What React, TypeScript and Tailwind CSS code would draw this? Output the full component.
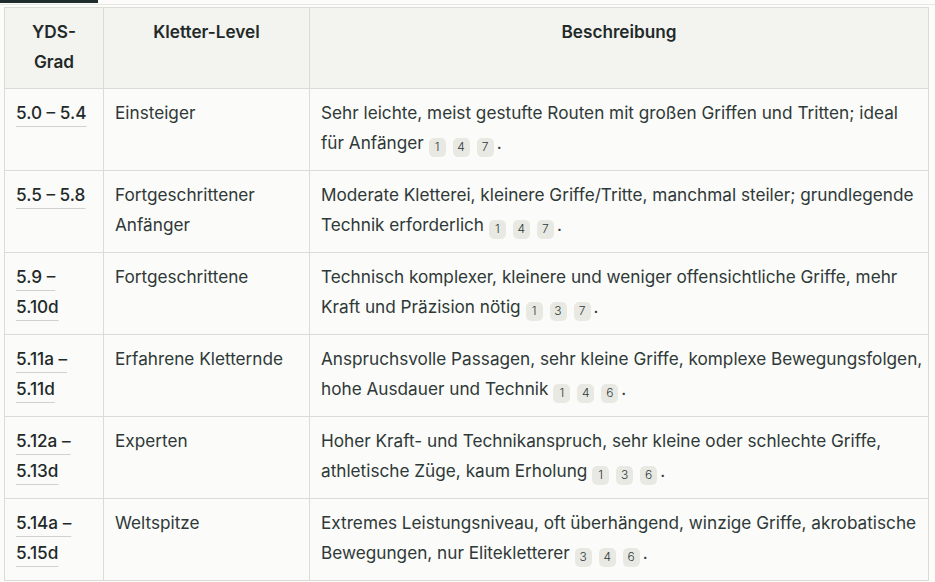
import React from "react";

type Row = {
  grade: string;
  level: string;
  desc: [string, string];
  refs: number[];
};

const rows: Row[] = [
  {
    grade: "5.0 – 5.4",
    level: "Einsteiger",
    desc: ["Sehr leichte, meist gestufte Routen mit großen Griffen und Tritten; ideal", "für Anfänger"],
    refs: [1, 4, 7],
  },
  {
    grade: "5.5 – 5.8",
    level: "Fortgeschrittener Anfänger",
    desc: ["Moderate Kletterei, kleinere Griffe/Tritte, manchmal steiler; grundlegende", "Technik erforderlich"],
    refs: [1, 4, 7],
  },
  {
    grade: "5.9 – 5.10d",
    level: "Fortgeschrittene",
    desc: ["Technisch komplexer, kleinere und weniger offensichtliche Griffe, mehr", "Kraft und Präzision nötig"],
    refs: [1, 3, 7],
  },
  {
    grade: "5.11a – 5.11d",
    level: "Erfahrene Kletternde",
    desc: ["Anspruchsvolle Passagen, sehr kleine Griffe, komplexe Bewegungsfolgen,", "hohe Ausdauer und Technik"],
    refs: [1, 4, 6],
  },
  {
    grade: "5.12a – 5.13d",
    level: "Experten",
    desc: ["Hoher Kraft- und Technikanspruch, sehr kleine oder schlechte Griffe,", "athletische Züge, kaum Erholung"],
    refs: [1, 3, 6],
  },
  {
    grade: "5.14a – 5.15d",
    level: "Weltspitze",
    desc: ["Extremes Leistungsniveau, oft überhängend, winzige Griffe, akrobatische", "Bewegungen, nur Elitekletterer"],
    refs: [3, 4, 6],
  },
];

function Cite({ n }: { n: number }) {
  return (
    <span className="mr-[7px] inline-flex h-[19px] w-[17px] items-center justify-center rounded-[5px] bg-[#e9e9e4] align-[-2px] text-[12px] font-light leading-none text-[#2e3938]">
      {n}
    </span>
  );
}

export default function App() {
  return (
    <div className="min-h-screen w-[935px] bg-[#fcfcfa] text-[#2e3938] [font-family:Inter,'Liberation_Sans',sans-serif] text-[17.2px] leading-[30px]">
      {/* tab strip */}
      <div className="h-[5px] border-b border-[#e6e6e2]">
        <div className="h-[3px] w-[98px] bg-[#1f2c2d]" />
      </div>

      <div className="pl-[4px] pt-[2px]">
        <table className="w-[925px] table-fixed border-collapse border border-[#dcdcd7]">
          <colgroup>
            <col className="w-[99px]" />
            <col className="w-[206px]" />
            <col />
          </colgroup>
          <thead>
            <tr className="bg-[#f3f3ef]">
              <th className="border border-[#dcdcd7] px-[11px] pt-[9px] pb-[11px] align-top font-semibold text-center text-[#1f2a29]">
                YDS-
                <br />
                Grad
              </th>
              <th className="border border-[#dcdcd7] px-[11px] pt-[9px] pb-[11px] align-top font-semibold text-center text-[#1f2a29]">
                Kletter-Level
              </th>
              <th className="border border-[#dcdcd7] px-[11px] pt-[9px] pb-[11px] align-top font-semibold text-center text-[#1f2a29]">
                Beschreibung
              </th>
            </tr>
          </thead>
          <tbody>
            {rows.map((r) => (
              <tr key={r.grade} className="bg-[#fbfbf9]">
                <td className="border border-[#dcdcd7] px-[11px] pt-[9px] pb-[12px] align-top font-medium text-[#1f2a29]">
                  <span className="underline decoration-[#cfd2cd] underline-offset-[7px]">
                    {r.grade}
                  </span>
                </td>
                <td className="border border-[#dcdcd7] px-[11px] pt-[9px] pb-[12px] align-top">
                  {r.level}
                </td>
                <td className="border border-[#dcdcd7] pl-[11px] pr-[4px] pt-[9px] pb-[12px] align-top">
                  <span className="whitespace-nowrap">{r.desc[0]}</span>
                  <br />
                  {r.desc[1]}{" "}
                  {r.refs.map((n) => (
                    <Cite key={n} n={n} />
                  ))}
                  <span className="-ml-[4px]">.</span>
                </td>
              </tr>
            ))}
          </tbody>
        </table>
      </div>
    </div>
  );
}
